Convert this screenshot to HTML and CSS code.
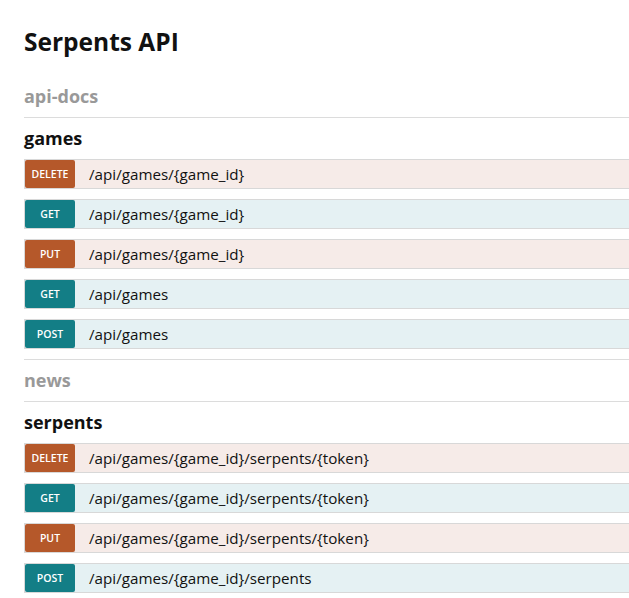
FILE: index.html
```html
<!DOCTYPE html>
<html lang="en">
<head>
<meta charset="utf-8">
<title>Serpents API</title>
<link rel="stylesheet" href="styles.css">
</head>
<body>
<div class="container">
  <h1 class="title">Serpents API</h1>
  <ul class="resources">
    <li class="resource collapsed">
      <h2 class="resource-name">api-docs</h2>
    </li>
    <li class="resource">
      <h2 class="resource-name">games</h2>
      <ul class="operations">
        <li class="op op-delete"><span class="method">delete</span><span class="path">/api/games/{game_id}</span></li>
        <li class="op op-get"><span class="method">get</span><span class="path">/api/games/{game_id}</span></li>
        <li class="op op-put"><span class="method">put</span><span class="path">/api/games/{game_id}</span></li>
        <li class="op op-get"><span class="method">get</span><span class="path">/api/games</span></li>
        <li class="op op-post"><span class="method">post</span><span class="path">/api/games</span></li>
      </ul>
    </li>
    <li class="resource collapsed">
      <h2 class="resource-name">news</h2>
    </li>
    <li class="resource">
      <h2 class="resource-name">serpents</h2>
      <ul class="operations">
        <li class="op op-delete"><span class="method">delete</span><span class="path">/api/games/{game_id}/serpents/{token}</span></li>
        <li class="op op-get"><span class="method">get</span><span class="path">/api/games/{game_id}/serpents/{token}</span></li>
        <li class="op op-put"><span class="method">put</span><span class="path">/api/games/{game_id}/serpents/{token}</span></li>
        <li class="op op-post"><span class="method">post</span><span class="path">/api/games/{game_id}/serpents</span></li>
      </ul>
    </li>
  </ul>
</div>
</body>
</html>
```
FILE: styles.css
```css
html, body {
  margin: 0;
  padding: 0;
  background: #fff;
  overflow: hidden;
}

body {
  font-family: "Open Sans", "DejaVu Sans", sans-serif;
  color: #222;
}

.container {
  width: 700px;
  padding-left: 24px;
}

.title {
  margin: 25px 0 17px;
  font-size: 24.5px;
  line-height: 34px;
  font-weight: 700;
  color: #111;
}

.resources,
.operations {
  list-style: none;
  margin: 0;
  padding: 0;
}

.resource {
  border-bottom: 1px solid #dcdcdc;
}

.resource-name {
  margin: 0;
  font-size: 18px;
  line-height: 41px;
  font-weight: 700;
  color: #111;
}

.collapsed .resource-name {
  color: #999;
}

.operations {
  display: flex;
  flex-direction: column;
  gap: 10px;
  padding-bottom: 10px;
}

.op {
  display: flex;
  align-items: center;
  height: 28px;
  border: 1px solid #d8d8d8;
}

.op-delete,
.op-put {
  background: #f6ebe8;
}

.op-get,
.op-post {
  background: #e5f1f3;
}

.method {
  flex: 0 0 50px;
  height: 28px;
  line-height: 29px;
  border-radius: 2px;
  text-align: center;
  text-transform: uppercase;
  font-size: 10.5px;
  font-weight: 600;
  color: #fff;
}

.op-delete .method,
.op-put .method {
  background: #b5582a;
}

.op-get .method,
.op-post .method {
  background: #137e86;
}

.path {
  margin-left: 14px;
  font-size: 15.2px;
  color: #111;
}
```
